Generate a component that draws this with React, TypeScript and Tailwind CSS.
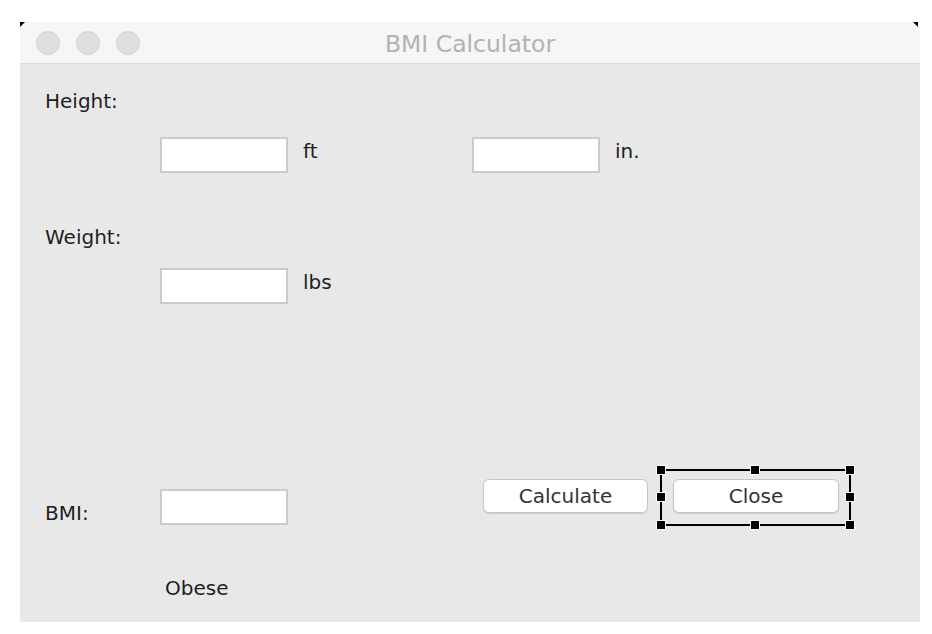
import React from 'react'

const font = { fontFamily: '"DejaVu Sans", "Liberation Sans", sans-serif' }

function Field() {
  return <div className="w-[128px] h-[36px] bg-white border-2 border-[#cbcbcb] shrink-0" />
}

function Label({ children, className = '' }: { children: React.ReactNode; className?: string }) {
  return <div className={`text-[20px] leading-[24px] text-[#1e1e1e] ${className}`}>{children}</div>
}

function MacButton({ children, className = '' }: { children: React.ReactNode; className?: string }) {
  return (
    <button
      className={`h-[34px] rounded-[6px] bg-white border border-[#c6c6c6] shadow-[0_1px_1px_rgba(0,0,0,0.12)] text-[20px] leading-[24px] text-[#333] shrink-0 ${className}`}
    >
      {children}
    </button>
  )
}

function Handle({ className }: { className: string }) {
  return <div className={`absolute w-[8px] h-[8px] bg-black ring-1 ring-white ${className}`} />
}

export default function App() {
  return (
    <div className="w-[932px] h-[634px] bg-white pt-[22px] pl-[20px]" style={font}>
      <div className="relative w-[900px] h-[600px] bg-[#e8e8e8] rounded-t-[8px]">
        {/* corner marks */}
        <div className="absolute left-0 top-0 w-0 h-0 border-t-[5px] border-r-[5px] border-t-black border-r-transparent" />
        <div className="absolute right-[2px] top-0 w-0 h-0 border-t-[5px] border-l-[5px] border-t-black border-l-transparent" />

        {/* title bar */}
        <div className="h-[42px] grid grid-cols-[1fr_auto_1fr] items-center bg-[#f6f6f6] border-b border-[#dadada] rounded-t-[8px]">
          <div className="flex gap-[16px] pl-[16px]">
            <div className="w-[24px] h-[24px] rounded-full bg-[#dfdfdf] border border-[#d3d3d3]" />
            <div className="w-[24px] h-[24px] rounded-full bg-[#dfdfdf] border border-[#d3d3d3]" />
            <div className="w-[24px] h-[24px] rounded-full bg-[#dfdfdf] border border-[#d3d3d3]" />
          </div>
          <div className="mt-[3px] text-[23.5px] leading-[28px] text-[#b2b2b2]">BMI Calculator</div>
          <div />
        </div>

        {/* content */}
        <div className="pt-[25px] pl-[25px]">
          <Label>Height:</Label>

          <div className="flex items-start mt-[24px] pl-[115px]">
            <Field />
            <Label className="mt-[2px] ml-[15px] w-[169px]">ft</Label>
            <Field />
            <Label className="mt-[2px] ml-[15px]">in.</Label>
          </div>

          <Label className="mt-[52px]">Weight:</Label>

          <div className="flex items-start mt-[19px] pl-[115px]">
            <Field />
            <Label className="mt-[2px] ml-[15px]">lbs</Label>
          </div>

          <div className="flex items-start mt-[165px]">
            <Label className="mt-[32px] w-[115px]">BMI:</Label>
            <div className="mt-[20px]">
              <Field />
            </div>
            <MacButton className="mt-[10px] ml-[195px] w-[165px]">Calculate</MacButton>
            <div className="relative ml-[12px] w-[191px] h-[57px] border-2 border-black pl-[11px] pt-[8px]">
              <MacButton className="w-[166px]">Close</MacButton>
              <Handle className="-left-[5px] -top-[5px]" />
              <Handle className="left-[89px] -top-[5px]" />
              <Handle className="-right-[5px] -top-[5px]" />
              <Handle className="-left-[5px] top-[22px]" />
              <Handle className="-right-[5px] top-[22px]" />
              <Handle className="-left-[5px] -bottom-[5px]" />
              <Handle className="left-[89px] -bottom-[5px]" />
              <Handle className="-right-[5px] -bottom-[5px]" />
            </div>
          </div>

          <Label className="mt-[50px] pl-[120px]">Obese</Label>
        </div>
      </div>
    </div>
  )
}
